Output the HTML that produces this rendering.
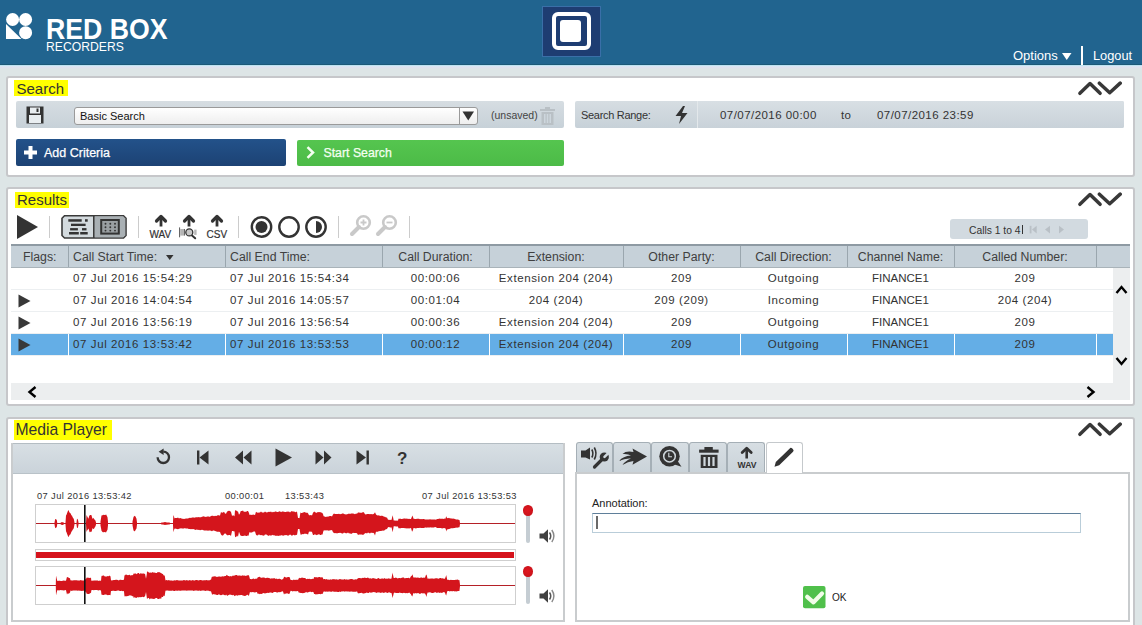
<!DOCTYPE html>
<html><head><meta charset="utf-8">
<style>
*{box-sizing:border-box;margin:0;padding:0}
html,body{width:1142px;height:625px;overflow:hidden}
body{background:#dde5e6;font-family:"Liberation Sans",sans-serif;position:relative;color:#333}
.a{position:absolute}
.hdr{left:0;top:0;width:1142px;height:65px;background:#21648f}
.hline{left:0;top:64px;width:1142px;height:5px;background:linear-gradient(#1c5878 0,#1c5878 1px,#bde2f1 1px,#bde2f1 2px,#dae6f5 2px,#e0e0ec 4px,#dde5e6 5px)}
.panel{background:#fff;border:2px solid #c6c7ca;border-radius:3px}
.title{background:#ffff00;font-size:15px;color:#333;line-height:17px;padding:0 0 0 2.5px;overflow:visible;white-space:nowrap}
.bar{background:linear-gradient(#d6dde2,#c7d1d8);border-radius:2px}
.t11{font-size:11px}
.th{background:#c6d1d9;border-top:2px solid #8e9aa3;border-bottom:1px solid #a9b3b9}
.col{position:absolute;top:0;height:100%;border-left:1px solid #9aa6ae}
.hd{position:absolute;font-size:12.3px;color:#404040;top:4px;white-space:nowrap}
.row{position:absolute;left:11px;width:1102px;height:22px;border-bottom:1px solid #eceff1}
.cell{position:absolute;font-size:11.5px;color:#333;top:4px;white-space:nowrap;letter-spacing:0.6px}
.sel{background:#64aee6}
.vs{position:absolute;top:0;height:22px;border-left:1px solid #fff}
.wbox{border:1px solid #cfcfcf;background:#fff}
.tab{position:absolute;top:442px;height:30px;background:linear-gradient(#d7dee3,#cad3d9);border:1px solid #a5afb6;border-bottom:none;border-radius:3px 3px 0 0}
</style></head><body>

<!-- HEADER -->
<div class="a hdr"></div>
<div class="a hline"></div>
<svg class="a" style="left:6px;top:13px" width="27" height="27" viewBox="0 0 27 27">
 <circle cx="6.6" cy="6.5" r="6.5" fill="#fff"/>
 <circle cx="19.6" cy="6.5" r="6.5" fill="#fff"/>
 <circle cx="19.6" cy="19.7" r="6.5" fill="#fff"/>
 <path d="M0 11 L0 26 L15.5 26 Z" fill="#fff"/>
</svg>
<div class="a" style="left:46px;top:14px;font-size:29px;font-weight:bold;color:#fff;line-height:30px;transform:scaleX(0.92);transform-origin:0 0;white-space:nowrap">RED BOX</div>
<div class="a" style="left:46px;top:41px;font-size:12.3px;color:#fff;line-height:13px;transform:scaleX(0.99);transform-origin:0 0;white-space:nowrap">RECORDERS</div>

<div class="a" style="left:542px;top:6px;width:59px;height:51px;background:#1e3d72;border:1px solid #3a6fa8"></div>
<div class="a" style="left:552px;top:11.5px;width:38.5px;height:38.8px;border:4.2px solid #fff;border-radius:6px"></div>
<div class="a" style="left:560.2px;top:20.4px;width:21.2px;height:21.6px;background:#fff;border-radius:3px"></div>

<div class="a" style="left:1013px;top:48px;font-size:13px;color:#fff;line-height:16px">Options</div>
<svg class="a" style="left:1062px;top:52.5px" width="10" height="8"><path d="M0 0 L9.5 0 L4.75 7 Z" fill="#fff"/></svg>
<div class="a" style="left:1081px;top:46px;width:2px;height:19px;background:#fff"></div>
<div class="a" style="left:1093px;top:48px;font-size:12.8px;color:#fff;line-height:16px">Logout</div>

<!-- SEARCH PANEL -->
<div class="a panel" style="left:6px;top:76px;width:1129px;height:101px"></div>
<div class="a title" style="left:14px;top:80px;height:16px;width:54px">Search</div>
<svg class="a collapse" style="left:1077px;top:81px" width="46" height="15" viewBox="0 0 46 15">
 <path d="M2.9 12.3 L13 2.6 L23.1 12.3" fill="none" stroke="#383838" stroke-width="3.5" stroke-linecap="round" stroke-linejoin="round"/>
 <path d="M22.4 2.2 L32.7 11.7 L43.2 2.1" fill="none" stroke="#383838" stroke-width="3.5" stroke-linecap="round" stroke-linejoin="round"/>
</svg>

<div class="a bar" style="left:16px;top:101px;width:548px;height:27px"></div>
<svg class="a" style="left:26px;top:106px" width="18" height="18" viewBox="0 0 18 18">
 <rect x="0.5" y="0.5" width="17" height="17" fill="#333"/>
 <rect x="4" y="1.5" width="10" height="6" fill="#e9eef1"/>
 <rect x="10.5" y="2.5" width="2" height="3.5" fill="#333"/>
 <rect x="3" y="9" width="12" height="8" fill="#e9eef1"/>
</svg>
<div class="a" style="left:74px;top:107px;width:404px;height:18px;border:1px solid #9a9a9a;border-radius:3px;background:linear-gradient(#fff,#eee)"></div>
<div class="a" style="left:80px;top:110px;font-size:11px;color:#111">Basic Search</div>
<div class="a" style="left:459px;top:108px;width:1px;height:16px;background:#9a9a9a"></div>
<svg class="a" style="left:462px;top:111px" width="13" height="10"><path d="M0.5 0.5 L12 0.5 L6.25 9.5 Z" fill="#333"/></svg>
<div class="a" style="left:491px;top:109px;font-size:10.5px;color:#444">(unsaved)</div>
<svg class="a" style="left:540px;top:107px" width="15" height="18" viewBox="0 0 15 18">
 <rect x="0" y="2" width="15" height="2" fill="#b9c0c5"/>
 <rect x="5" y="0" width="5" height="2" fill="#b9c0c5"/>
 <path d="M1.5 5 H13.5 V18 H1.5 Z" fill="#b9c0c5"/>
 <rect x="4" y="7" width="1.5" height="9" fill="#cdd6dd"/>
 <rect x="6.75" y="7" width="1.5" height="9" fill="#cdd6dd"/>
 <rect x="9.5" y="7" width="1.5" height="9" fill="#cdd6dd"/>
</svg>

<div class="a bar" style="left:575px;top:101px;width:549px;height:27px"></div>
<div class="a" style="left:697px;top:101px;width:427px;height:27px;background:linear-gradient(#d8dfe4,#c9d2d9);border-left:1px solid #e3e8eb;border-radius:0 2px 2px 0"></div>
<div class="a" style="left:581px;top:109px;font-size:11px;letter-spacing:-0.3px;color:#333">Search Range:</div>
<svg class="a" style="left:674px;top:106px" width="15" height="18" viewBox="0 0 15 18"><path d="M9 0 L1.5 10 H7 L5 18 L13.5 7 H8 L11 0 Z" fill="#333"/></svg>
<div class="a" style="left:720px;top:109px;font-size:11.5px;letter-spacing:0.45px;color:#333">07/07/2016 00:00</div>
<div class="a" style="left:841px;top:109px;font-size:11.5px;letter-spacing:0.3px;color:#333">to</div>
<div class="a" style="left:877px;top:109px;font-size:11.5px;letter-spacing:0.45px;color:#333">07/07/2016 23:59</div>

<div class="a" style="left:16px;top:139px;width:270px;height:27px;background:linear-gradient(#23528a,#1c4274);border-radius:2px"></div>
<svg class="a" style="left:24px;top:146px" width="13" height="13" viewBox="0 0 13 13"><path d="M4.5 0 H8.5 V4.5 H13 V8.5 H8.5 V13 H4.5 V8.5 H0 V4.5 H4.5 Z" fill="#fff"/></svg>
<div class="a" style="left:44px;top:146px;font-size:12.5px;color:#fff;-webkit-text-stroke:0.25px #fff">Add Criteria</div>
<div class="a" style="left:297px;top:140px;width:267px;height:26px;background:linear-gradient(#55c54f,#4cbb47);border-radius:2px"></div>
<svg class="a" style="left:306px;top:146px" width="9" height="13" viewBox="0 0 9 13"><path d="M1.5 1.2 L7 6.5 L1.5 11.8" fill="none" stroke="#f4fff0" stroke-width="2.5"/></svg>
<div class="a" style="left:323.5px;top:146px;font-size:12.3px;color:#f4fff0;-webkit-text-stroke:0.25px #f4fff0">Start Search</div>

<!-- RESULTS PANEL -->
<div class="a panel" style="left:6px;top:187px;width:1129px;height:219px"></div>
<div class="a title" style="left:14.5px;top:192px;height:16px;width:54.5px;line-height:15px">Results</div>
<svg class="a" style="left:1077px;top:192px" width="46" height="15" viewBox="0 0 46 15">
 <path d="M2.9 12.3 L13 2.6 L23.1 12.3" fill="none" stroke="#383838" stroke-width="3.5" stroke-linecap="round" stroke-linejoin="round"/>
 <path d="M22.4 2.2 L32.7 11.7 L43.2 2.1" fill="none" stroke="#383838" stroke-width="3.5" stroke-linecap="round" stroke-linejoin="round"/>
</svg>

<svg class="a" style="left:16px;top:214px" width="23" height="26"><path d="M1 1 L22 13 L1 25 Z" fill="#333"/></svg>
<div class="a" style="left:49px;top:216px;width:1px;height:22px;background:#ccc"></div>
<svg class="a" style="left:60px;top:214px" width="68" height="26" viewBox="60 214 68 26">
 <path d="M64.5 215.8 H123.5 L126 218.3 V235.5 L123.5 238 H64.5 L62 235.5 V218.3 Z" fill="#d3dade" stroke="#3a3a3a" stroke-width="1.6"/>
 <path d="M94.5 216.6 H123.2 L125.2 218.6 V235.2 L123.2 237.2 H94.5 Z" fill="#a9b0b4"/>
 <rect x="93" y="216" width="1.6" height="22" fill="#3a3a3a"/>
 <g fill="#333">
 <rect x="68.3" y="219.2" width="13.4" height="2.5"/><rect x="85" y="219.2" width="2.7" height="2.5"/>
 <rect x="71" y="223.7" width="14.6" height="2.3"/>
 <rect x="70.1" y="228.1" width="7.8" height="2.3"/><rect x="82" y="228.1" width="4.5" height="2.3"/>
 <rect x="69" y="232" width="9.8" height="2.5"/><rect x="80.2" y="232" width="7.5" height="2.5"/>
 </g>
 <rect x="101.2" y="220" width="17.6" height="13.6" fill="#9a9fa2" stroke="#333" stroke-width="2"/>
 <g fill="#333"><circle cx="105.5" cy="223.7" r="0.95"/><circle cx="110.3" cy="223.7" r="0.95"/><circle cx="115" cy="223.7" r="0.95"/>
 <circle cx="105.5" cy="227.3" r="0.95"/><circle cx="110.3" cy="227.3" r="0.95"/><circle cx="115" cy="227.3" r="0.95"/>
 <circle cx="105.5" cy="230.6" r="0.95"/><circle cx="110.3" cy="230.6" r="0.95"/><circle cx="115" cy="230.6" r="0.95"/></g>
</svg>
<div class="a" style="left:138px;top:216px;width:1px;height:22px;background:#ccc"></div>

<svg class="a" style="left:154px;top:214px" width="14" height="13"><path d="M2.5 7 L7 2.5 L11.5 7" fill="none" stroke="#333" stroke-width="3.2" stroke-linecap="round" stroke-linejoin="round"/><path d="M7 3 V12.5" stroke="#333" stroke-width="2.8"/></svg>
<div class="a" style="left:149.5px;top:229.5px;font-size:10px;color:#333;line-height:10px;-webkit-text-stroke:0.2px #333">WAV</div>
<svg class="a" style="left:182px;top:214px" width="14" height="13"><path d="M2.5 7 L7 2.5 L11.5 7" fill="none" stroke="#333" stroke-width="3.2" stroke-linecap="round" stroke-linejoin="round"/><path d="M7 3 V12.5" stroke="#333" stroke-width="2.8"/></svg>
<svg class="a" style="left:176px;top:226px" width="24" height="15" viewBox="176 226 24 15">
 <rect x="179" y="227.4" width="1.1" height="9.9" fill="#666"/>
 <rect x="180.2" y="229" width="3.8" height="6.6" fill="#b5b5b5"/>
 <rect x="184" y="229" width="0.9" height="6.6" fill="#555"/>
 <rect x="194.2" y="229.6" width="2.4" height="5.3" fill="#b8b8b8"/>
 <circle cx="189.3" cy="232.4" r="3.5" fill="#c8c8c8" stroke="#333" stroke-width="1.3"/>
 <path d="M192 235.6 L195.2 238.3" stroke="#333" stroke-width="2" stroke-linecap="round"/>
</svg>
<svg class="a" style="left:210px;top:214px" width="14" height="13"><path d="M2.5 7 L7 2.5 L11.5 7" fill="none" stroke="#333" stroke-width="3.2" stroke-linecap="round" stroke-linejoin="round"/><path d="M7 3 V12.5" stroke="#333" stroke-width="2.8"/></svg>
<div class="a" style="left:206.5px;top:229.5px;font-size:10px;color:#333;line-height:10px;-webkit-text-stroke:0.2px #333">CSV</div>
<div class="a" style="left:238px;top:216px;width:1px;height:22px;background:#ccc"></div>

<svg class="a" style="left:250px;top:215px" width="78" height="24">
 <circle cx="11.5" cy="12" r="9.7" fill="none" stroke="#333" stroke-width="2.4"/><circle cx="11.5" cy="12" r="6" fill="#333"/>
 <circle cx="39" cy="12" r="9.7" fill="none" stroke="#333" stroke-width="2.4"/>
 <circle cx="66" cy="12" r="9.7" fill="none" stroke="#333" stroke-width="2.4"/><path d="M66 6 A6 6 0 0 1 66 18 Z" fill="#333"/>
</svg>
<div class="a" style="left:338px;top:216px;width:1px;height:22px;background:#ccc"></div>
<svg class="a" style="left:349px;top:214px" width="52" height="25">
 <g stroke="#c9c9c9" fill="none"><circle cx="14.5" cy="8.5" r="6.3" stroke-width="2.6"/><path d="M10 13 L3 20" stroke-width="4" stroke-linecap="round"/><path d="M14.5 5.5 V11.5 M11.5 8.5 H17.5" stroke-width="1.8"/>
 <circle cx="40.5" cy="8.5" r="6.3" stroke-width="2.6"/><path d="M36 13 L29 20" stroke-width="4" stroke-linecap="round"/><path d="M37.5 8.5 H43.5" stroke-width="1.8"/></g>
</svg>
<div class="a" style="left:409px;top:216px;width:1px;height:22px;background:#ccc"></div>

<div class="a" style="left:950px;top:219px;width:138px;height:20px;background:#d2dae0;border-radius:3px"></div>
<div class="a" style="left:969px;top:224.5px;font-size:10.3px;color:#333">Calls 1 to 4</div>
<div class="a" style="left:1022px;top:224.5px;width:1.2px;height:9.5px;background:#333"></div>
<svg class="a" style="left:1029px;top:225px" width="36" height="10">
 <g fill="#b9c0c6"><rect x="0.7" y="0.8" width="1.8" height="7.6"/><path d="M7.7 0.8 L3 4.6 L7.7 8.4 Z"/><path d="M21 0.8 L16 4.6 L21 8.4 Z"/><path d="M30 0.8 L35 4.6 L30 8.4 Z"/></g>
</svg>

<!-- table -->
<div class="a th" style="left:11px;top:244px;width:1119px;height:24px">
 <div class="col" style="left:57px"></div>
 <div class="col" style="left:214px"></div>
 <div class="col" style="left:371px"></div>
 <div class="col" style="left:478px"></div>
 <div class="col" style="left:612px"></div>
 <div class="col" style="left:729px"></div>
 <div class="col" style="left:836px"></div>
 <div class="col" style="left:943px"></div>
 <div class="col" style="left:1085px"></div>
 <div class="hd" style="left:12px">Flags:</div>
 <div class="hd" style="left:62px">Call Start Time:</div>
 <svg class="a" style="left:155px;top:9px" width="8" height="6"><path d="M0 0 H7.5 L3.75 5 Z" fill="#333"/></svg>
 <div class="hd" style="left:219px">Call End Time:</div>
 <div class="hd" style="left:371px;width:107px;text-align:center">Call Duration:</div>
 <div class="hd" style="left:478px;width:134px;text-align:center">Extension:</div>
 <div class="hd" style="left:612px;width:117px;text-align:center">Other Party:</div>
 <div class="hd" style="left:729px;width:107px;text-align:center">Call Direction:</div>
 <div class="hd" style="left:836px;width:107px;text-align:center">Channel Name:</div>
 <div class="hd" style="left:943px;width:142px;text-align:center">Called Number:</div>
</div>

<div class="row" style="top:268px"><div class="cell" style="left:62px">07 Jul 2016 15:54:29</div><div class="cell" style="left:219px">07 Jul 2016 15:54:34</div><div class="cell" style="left:371px;width:107px;text-align:center">00:00:06</div><div class="cell" style="left:478px;width:134px;text-align:center">Extension 204 (204)</div><div class="cell" style="left:612px;width:117px;text-align:center">209</div><div class="cell" style="left:729px;width:107px;text-align:center">Outgoing</div><div class="cell" style="left:836px;width:107px;text-align:center;letter-spacing:0">FINANCE1</div><div class="cell" style="left:943px;width:142px;text-align:center">209</div></div>
<div class="row" style="top:290px"><svg class="a" style="left:7px;top:3.5px" width="14" height="14"><path d="M0.5 0.5 L12.5 7 L0.5 13.5 Z" fill="#383838"/></svg><div class="cell" style="left:62px">07 Jul 2016 14:04:54</div><div class="cell" style="left:219px">07 Jul 2016 14:05:57</div><div class="cell" style="left:371px;width:107px;text-align:center">00:01:04</div><div class="cell" style="left:478px;width:134px;text-align:center">204 (204)</div><div class="cell" style="left:612px;width:117px;text-align:center">209 (209)</div><div class="cell" style="left:729px;width:107px;text-align:center">Incoming</div><div class="cell" style="left:836px;width:107px;text-align:center;letter-spacing:0">FINANCE1</div><div class="cell" style="left:943px;width:142px;text-align:center">204 (204)</div></div>
<div class="row" style="top:312px"><svg class="a" style="left:7px;top:3.5px" width="14" height="14"><path d="M0.5 0.5 L12.5 7 L0.5 13.5 Z" fill="#383838"/></svg><div class="cell" style="left:62px">07 Jul 2016 13:56:19</div><div class="cell" style="left:219px">07 Jul 2016 13:56:54</div><div class="cell" style="left:371px;width:107px;text-align:center">00:00:36</div><div class="cell" style="left:478px;width:134px;text-align:center">Extension 204 (204)</div><div class="cell" style="left:612px;width:117px;text-align:center">209</div><div class="cell" style="left:729px;width:107px;text-align:center">Outgoing</div><div class="cell" style="left:836px;width:107px;text-align:center;letter-spacing:0">FINANCE1</div><div class="cell" style="left:943px;width:142px;text-align:center">209</div></div>
<div class="row sel" style="top:334px"><div class="vs" style="left:57px"></div><div class="vs" style="left:214px"></div><div class="vs" style="left:371px"></div><div class="vs" style="left:478px"></div><div class="vs" style="left:612px"></div><div class="vs" style="left:729px"></div><div class="vs" style="left:836px"></div><div class="vs" style="left:943px"></div><div class="vs" style="left:1085px"></div><svg class="a" style="left:7px;top:3.5px" width="14" height="14"><path d="M0.5 0.5 L12.5 7 L0.5 13.5 Z" fill="#383838"/></svg><div class="cell" style="left:62px">07 Jul 2016 13:53:42</div><div class="cell" style="left:219px">07 Jul 2016 13:53:53</div><div class="cell" style="left:371px;width:107px;text-align:center">00:00:12</div><div class="cell" style="left:478px;width:134px;text-align:center">Extension 204 (204)</div><div class="cell" style="left:612px;width:117px;text-align:center">209</div><div class="cell" style="left:729px;width:107px;text-align:center">Outgoing</div><div class="cell" style="left:836px;width:107px;text-align:center;letter-spacing:0">FINANCE1</div><div class="cell" style="left:943px;width:142px;text-align:center">209</div></div>

<div class="a" style="left:1113px;top:268px;width:17px;height:115px;background:#eceeef"></div>
<svg class="a" style="left:1115px;top:284px" width="13" height="11"><path d="M1.5 9 L6.5 3 L11.5 9" fill="none" stroke="#000" stroke-width="2.4"/></svg>
<svg class="a" style="left:1115px;top:356px" width="13" height="11"><path d="M1.5 2 L6.5 8 L11.5 2" fill="none" stroke="#000" stroke-width="2.4"/></svg>
<div class="a" style="left:11px;top:383px;width:1119px;height:17px;background:#eceeef"></div>
<svg class="a" style="left:26px;top:386px" width="12" height="12"><path d="M9.5 1 L3.5 6 L9.5 11" fill="none" stroke="#000" stroke-width="2.4"/></svg>
<svg class="a" style="left:1085px;top:386px" width="12" height="12"><path d="M2.5 1 L8.5 6 L2.5 11" fill="none" stroke="#000" stroke-width="2.4"/></svg>

<!-- MEDIA PLAYER PANEL -->
<div class="a panel" style="left:6px;top:417px;width:1129px;height:215px"></div>
<div class="a title" style="left:14px;top:420px;height:19.5px;width:98px;line-height:20px;font-size:15.7px;padding-left:1.5px">Media Player</div>
<svg class="a" style="left:1077px;top:422px" width="46" height="15" viewBox="0 0 46 15">
 <path d="M2.9 12.3 L13 2.6 L23.1 12.3" fill="none" stroke="#383838" stroke-width="3.5" stroke-linecap="round" stroke-linejoin="round"/>
 <path d="M22.4 2.2 L32.7 11.7 L43.2 2.1" fill="none" stroke="#383838" stroke-width="3.5" stroke-linecap="round" stroke-linejoin="round"/>
</svg>

<div class="a" style="left:11px;top:443px;width:554px;height:179px;border:2px solid #c9ccce;background:#fff"></div>
<div class="a" style="left:13px;top:443px;width:550px;height:31px;background:linear-gradient(#d8dfe4,#cad3da);border-top:1px solid #b4bdc3;border-bottom:1px solid #b9c2c8"></div>
<svg class="a" style="left:150px;top:446px" width="270" height="24">
 <g fill="#333" stroke="#333">
 <path d="M7.6 11.3 A5.7 5.7 0 1 0 13.3 5.6" fill="none" stroke-width="2.3"/><path d="M8.6 5.8 L13.6 2.6 L13.6 9 Z" stroke="none"/>
 <rect x="47" y="4.5" width="2.4" height="14" stroke="none"/><path d="M58.5 4.5 V18.5 L49.5 11.5 Z" stroke="none"/>
 <path d="M93 4.5 V18.5 L85 11.5 Z M101.5 4.5 V18.5 L93.5 11.5 Z" stroke="none"/>
 <path d="M125.5 2.5 V20.5 L142 11.5 Z" stroke="none"/>
 <path d="M165.5 4.5 V18.5 L173.5 11.5 Z M174 4.5 V18.5 L181.5 11.5 Z" stroke="none"/>
 <path d="M206.5 4.5 V18.5 L216 11.5 Z" stroke="none"/><rect x="216.5" y="4.5" width="2.4" height="14" stroke="none"/>
 </g>
 <text x="247" y="18" font-family="Liberation Sans" font-weight="bold" font-size="17" fill="#333">?</text>
</svg>

<div class="a" style="left:37px;top:491.2px;font-size:9.3px;color:#333;letter-spacing:0.4px">07 Jul 2016 13:53:42</div>
<div class="a" style="left:225px;top:491.2px;font-size:9.3px;color:#333;letter-spacing:0.4px">00:00:01</div>
<div class="a" style="left:285px;top:491.2px;font-size:9.3px;color:#333;letter-spacing:0.4px">13:53:43</div>
<div class="a" style="left:422px;top:491.2px;font-size:9.3px;color:#333;letter-spacing:0.4px">07 Jul 2016 13:53:53</div>

<div class="a wbox" style="left:35px;top:504px;width:481px;height:39px"></div>
<div class="a wbox" style="left:35px;top:549px;width:481px;height:12px"></div>
<div class="a" style="left:36px;top:552px;width:478px;height:6px;background:#d5121b"></div>
<div class="a wbox" style="left:35px;top:566px;width:481px;height:39px"></div>
<svg class="a" style="left:0;top:0" width="1142" height="625">
 <rect x="36" y="523" width="479" height="1" fill="#b52027"/>
 <rect x="36" y="585" width="479" height="1" fill="#b52027"/>
 <path fill="#d4151c" d="M54.5 522.5 55.2 519.0 55.5 519.0 56.5 519.7 56.7 519.5 57.2 522.6 L57.2 524.4 56.7 527.5 56.5 527.2 55.5 528.0 55.2 528.3 54.5 524.4Z M60.5 522.8 61.5 522.2 62.0 521.9 62.5 522.3 63.5 522.5 64.0 522.8 L64.0 524.3 63.5 524.4 62.5 524.9 62.0 524.9 61.5 524.7 60.5 524.3Z M65.5 522.5 66.0 515.5 66.5 514.7 67.5 511.9 68.3 509.9 68.5 510.3 69.5 512.4 70.5 513.3 71.5 515.6 72.0 515.6 72.5 517.0 73.5 518.6 73.8 519.0 74.5 522.5 L74.5 524.4 73.8 528.1 73.5 528.7 72.5 530.1 72.0 531.2 71.5 531.6 70.5 534.3 69.5 535.0 68.5 537.2 68.3 536.7 67.5 535.1 66.5 532.3 66.0 531.3 65.5 524.4Z M76.5 522.6 77.0 518.8 77.5 519.0 78.0 519.9 78.5 522.5 L78.5 524.4 78.0 527.3 77.5 527.9 77.0 528.1 76.5 524.4Z M86.0 522.6 86.5 514.9 87.0 516.0 88.0 517.9 88.5 518.8 89.0 516.5 89.5 515.6 90.0 514.9 91.0 515.0 91.5 515.3 92.0 517.2 92.5 518.8 93.0 518.4 93.5 517.7 94.0 518.9 95.0 520.1 95.5 520.8 96.0 522.6 L96.0 524.4 95.5 526.2 95.0 526.9 94.0 528.7 93.5 529.1 93.0 528.7 92.5 527.9 92.0 530.3 91.5 531.9 91.0 531.4 90.0 532.3 89.5 531.9 89.0 529.9 88.5 528.5 88.0 529.2 87.0 530.8 86.5 532.0 86.0 524.4Z M100.5 521.6 101.5 515.6 102.5 515.3 103.0 514.9 103.5 514.7 104.5 514.9 105.5 515.0 106.0 514.3 106.5 515.2 107.5 517.2 108.0 521.7 L108.0 525.3 107.5 529.8 106.5 531.4 106.0 532.4 105.5 532.2 104.5 532.0 103.5 532.3 103.0 532.2 102.5 532.1 101.5 530.7 100.5 525.4Z M132.5 521.6 133.5 517.1 134.5 515.8 135.0 516.2 135.5 516.6 136.5 518.7 137.0 522.5 L137.0 524.4 136.5 528.5 135.5 530.0 135.0 531.3 134.5 531.2 133.5 530.4 132.5 525.3Z M161.0 522.7 162.0 522.6 163.0 522.4 164.0 522.2 165.0 522.1 166.0 522.2 167.0 522.4 168.0 522.5 169.0 522.6 170.0 522.7 L170.0 524.2 169.0 524.4 168.0 524.5 167.0 524.7 166.0 524.7 165.0 525.0 164.0 524.8 163.0 524.6 162.0 524.4 161.0 524.3Z M173.0 521.5 173.4 515.0 174.0 516.5 174.5 518.5 175.0 518.1 176.0 518.1 177.0 517.9 178.0 517.5 179.0 518.4 180.0 518.1 181.0 518.3 182.0 518.8 183.0 518.7 184.0 518.9 185.0 518.8 186.0 518.5 187.0 518.6 188.0 518.4 189.0 518.1 190.0 517.8 191.0 517.9 192.0 517.5 193.0 517.5 194.0 517.5 195.0 517.8 196.0 517.1 197.0 517.6 198.0 517.0 199.0 517.2 200.0 517.3 201.0 517.2 202.0 516.8 203.0 516.5 204.0 516.3 205.0 517.0 206.0 516.8 207.0 516.8 208.0 516.3 209.0 516.7 210.0 516.7 211.0 515.9 212.0 515.8 213.0 515.7 214.0 516.3 215.0 515.8 216.0 516.1 217.0 515.7 218.0 515.0 219.0 515.6 220.0 515.5 221.0 511.9 222.0 512.7 223.0 512.5 224.0 511.7 225.0 513.5 226.0 513.8 227.0 511.7 228.0 510.9 229.0 510.7 230.0 511.1 231.0 511.9 232.0 515.7 233.0 515.6 234.0 515.5 234.5 516.4 235.0 510.5 236.0 510.2 237.0 511.3 238.0 511.6 239.0 514.7 240.0 513.2 240.5 511.6 241.0 510.9 242.0 511.0 243.0 510.6 244.0 512.0 245.0 511.5 246.0 512.0 247.0 511.0 248.0 511.0 248.5 511.9 249.0 512.9 249.5 515.1 250.0 514.8 251.0 514.8 252.0 515.1 253.0 514.6 254.0 514.8 255.0 515.0 256.0 511.7 257.0 512.6 258.0 512.8 259.0 512.5 260.0 512.6 261.0 511.5 262.0 512.6 263.0 512.6 264.0 512.6 265.0 511.6 266.0 512.3 267.0 512.4 268.0 512.1 269.0 511.7 270.0 512.1 271.0 511.4 272.0 512.4 273.0 511.8 274.0 512.3 275.0 511.6 276.0 511.4 277.0 512.0 278.0 511.9 279.0 511.5 280.0 511.2 281.0 512.2 282.0 511.6 283.0 511.4 284.0 511.8 285.0 512.0 286.0 512.0 287.0 511.4 288.0 511.7 289.0 511.6 290.0 512.4 291.0 511.4 292.0 511.1 293.0 511.8 294.0 511.2 295.0 512.3 296.0 512.0 297.0 511.6 298.0 518.0 299.0 518.1 299.5 518.2 300.0 514.9 300.5 512.3 301.0 513.0 302.0 512.9 303.0 512.5 304.0 512.2 305.0 512.1 306.0 513.1 307.0 512.4 308.0 513.3 309.0 515.3 310.0 515.2 311.0 515.0 312.0 515.5 313.0 512.7 314.0 511.8 315.0 511.8 316.0 513.0 317.0 512.6 318.0 511.9 319.0 512.2 320.0 511.9 321.0 512.5 322.0 512.8 322.5 513.2 323.0 514.1 323.6 516.2 324.0 516.2 325.0 516.7 326.0 516.9 327.0 516.4 328.0 516.7 329.0 516.3 330.0 516.1 331.0 516.1 332.0 516.5 333.0 514.4 334.0 513.6 335.0 514.1 336.0 514.0 337.0 514.1 338.0 513.9 339.0 513.7 340.0 514.3 341.0 513.9 342.0 513.8 343.0 513.3 344.0 514.0 345.0 514.3 346.0 514.4 347.0 514.2 348.0 514.1 349.0 513.5 350.0 513.9 351.0 513.6 352.0 513.6 353.0 513.6 354.0 513.8 355.0 514.2 356.0 513.6 357.0 513.8 358.0 512.4 359.0 512.4 360.0 512.8 361.0 512.7 362.0 512.7 363.0 512.0 364.0 512.5 365.0 514.2 366.0 514.5 367.0 514.1 368.0 514.1 369.0 514.0 370.0 514.3 371.0 514.1 372.0 514.3 373.0 514.3 374.0 513.8 375.0 512.3 376.0 514.6 377.0 515.2 378.0 515.4 379.0 515.2 380.0 516.0 381.0 515.7 382.0 515.8 383.0 516.0 384.0 516.8 385.0 516.7 386.0 517.6 387.0 517.5 388.0 519.8 389.0 519.7 390.0 519.9 391.0 519.8 391.5 520.0 392.0 517.9 392.6 515.2 393.0 517.1 393.7 520.5 394.0 520.6 395.0 520.6 396.0 520.8 397.0 520.5 398.0 520.7 398.5 518.6 399.0 518.9 400.0 518.6 401.0 518.9 402.0 519.1 403.0 518.7 404.0 518.6 405.0 518.6 406.0 518.8 407.0 518.6 408.0 519.0 409.0 518.8 410.0 518.9 411.0 518.9 412.0 516.4 412.3 515.4 413.0 517.1 413.5 518.8 414.0 518.8 415.0 519.0 416.0 519.1 417.0 518.7 418.0 518.7 419.0 518.8 420.0 519.3 421.0 518.9 422.0 519.3 423.0 519.1 424.0 519.0 425.0 519.4 426.0 519.4 427.0 519.5 428.0 519.5 429.0 519.5 430.0 519.3 431.0 519.6 432.0 519.6 433.0 519.6 434.0 519.6 435.0 519.6 436.0 519.7 437.0 518.9 438.0 518.9 439.0 518.7 440.0 518.6 441.0 519.0 442.0 518.5 443.0 519.0 444.0 518.7 445.0 518.5 445.5 518.8 446.0 516.7 446.2 516.3 447.0 517.9 448.0 518.2 449.0 517.8 450.0 518.5 451.0 518.2 452.0 518.8 453.0 518.6 454.0 518.8 455.0 519.0 456.0 519.4 457.0 519.4 458.0 519.6 459.0 519.9 459.5 519.9 460.0 522.9 L460.0 524.1 459.5 527.2 459.0 527.2 458.0 527.5 457.0 527.8 456.0 527.5 455.0 528.0 454.0 528.1 453.0 528.3 452.0 528.2 451.0 528.3 450.0 528.8 449.0 528.9 448.0 529.3 447.0 529.4 446.2 531.5 446.0 530.0 445.5 528.4 445.0 528.2 444.0 527.9 443.0 528.2 442.0 528.4 441.0 528.0 440.0 527.9 439.0 527.9 438.0 528.0 437.0 528.1 436.0 527.2 435.0 527.1 434.0 527.4 433.0 527.6 432.0 527.4 431.0 527.5 430.0 527.3 429.0 527.7 428.0 527.3 427.0 527.7 426.0 527.5 425.0 527.6 424.0 528.0 423.0 528.0 422.0 528.1 421.0 528.1 420.0 527.7 419.0 528.0 418.0 528.1 417.0 528.0 416.0 528.4 415.0 528.3 414.0 528.0 413.5 527.9 413.0 529.9 412.3 531.6 412.0 531.5 411.0 528.0 410.0 528.3 409.0 528.4 408.0 528.2 407.0 528.4 406.0 528.3 405.0 528.3 404.0 528.1 403.0 528.0 402.0 528.1 401.0 528.0 400.0 528.5 399.0 528.0 398.5 528.5 398.0 526.5 397.0 526.4 396.0 526.4 395.0 526.2 394.0 526.2 393.7 526.2 393.0 530.2 392.6 532.2 392.0 529.2 391.5 527.3 391.0 527.4 390.0 527.4 389.0 527.1 388.0 527.3 387.0 528.9 386.0 529.3 385.0 529.7 384.0 530.7 383.0 530.5 382.0 530.8 381.0 531.0 380.0 530.9 379.0 531.3 378.0 531.4 377.0 531.9 376.0 531.6 375.0 535.6 374.0 533.3 373.0 532.8 372.0 533.0 371.0 532.4 370.0 533.5 369.0 533.1 368.0 532.6 367.0 533.4 366.0 532.9 365.0 533.3 364.0 534.2 363.0 535.1 362.0 534.6 361.0 534.4 360.0 534.4 359.0 534.6 358.0 534.9 357.0 533.2 356.0 533.0 355.0 533.0 354.0 533.0 353.0 532.8 352.0 533.4 351.0 533.9 350.0 533.2 349.0 533.6 348.0 532.6 347.0 533.3 346.0 533.2 345.0 533.1 344.0 532.6 343.0 533.4 342.0 533.4 341.0 532.9 340.0 532.8 339.0 533.1 338.0 533.1 337.0 533.6 336.0 533.1 335.0 533.2 334.0 532.9 333.0 532.3 332.0 530.1 331.0 530.3 330.0 530.3 329.0 530.7 328.0 530.5 327.0 530.2 326.0 530.5 325.0 530.3 324.0 530.4 323.6 530.5 323.0 532.6 322.5 534.7 322.0 534.2 321.0 535.0 320.0 534.9 319.0 534.1 318.0 534.8 317.0 534.7 316.0 535.2 315.0 534.1 314.0 535.0 313.0 534.9 312.0 532.1 311.0 531.5 310.0 531.7 309.0 531.6 308.0 534.8 307.0 533.7 306.0 534.1 305.0 533.6 304.0 534.0 303.0 534.3 302.0 534.0 301.0 534.9 300.5 534.2 300.0 532.0 299.5 529.1 299.0 528.9 298.0 529.1 297.0 534.9 296.0 534.7 295.0 535.5 294.0 534.9 293.0 534.7 292.0 535.9 291.0 535.0 290.0 534.6 289.0 535.2 288.0 535.7 287.0 535.3 286.0 534.9 285.0 535.3 284.0 535.2 283.0 536.0 282.0 535.1 281.0 535.4 280.0 535.6 279.0 535.8 278.0 535.9 277.0 535.4 276.0 536.0 275.0 535.5 274.0 535.3 273.0 535.2 272.0 534.8 271.0 535.9 270.0 535.0 269.0 535.7 268.0 535.7 267.0 534.8 266.0 534.5 265.0 534.5 264.0 535.7 263.0 535.5 262.0 535.3 261.0 534.9 260.0 535.2 259.0 534.2 258.0 535.3 257.0 535.4 256.0 534.8 255.0 531.6 254.0 531.6 253.0 531.8 252.0 532.4 251.0 532.4 250.0 532.5 249.5 531.9 249.0 533.8 248.5 536.0 248.0 535.2 247.0 536.0 246.0 535.9 245.0 535.5 244.0 535.8 243.0 536.1 242.0 536.1 241.0 535.7 240.5 535.5 240.0 534.4 239.0 531.8 238.0 536.8 237.0 535.6 236.0 537.2 235.0 536.7 234.5 531.2 234.0 531.5 233.0 530.9 232.0 531.0 231.0 536.0 230.0 535.0 229.0 535.1 228.0 535.3 227.0 535.3 226.0 533.9 225.0 533.2 224.0 534.2 223.0 535.4 222.0 535.5 221.0 534.4 220.0 532.0 219.0 531.7 218.0 531.8 217.0 531.7 216.0 531.3 215.0 530.9 214.0 530.6 213.0 530.5 212.0 531.3 211.0 530.7 210.0 530.4 209.0 530.5 208.0 530.8 207.0 530.6 206.0 530.4 205.0 530.6 204.0 530.6 203.0 530.1 202.0 529.8 201.0 530.0 200.0 530.2 199.0 529.7 198.0 530.1 197.0 529.5 196.0 529.8 195.0 529.9 194.0 529.1 193.0 529.3 192.0 529.1 191.0 529.3 190.0 528.9 189.0 529.0 188.0 528.7 187.0 528.3 186.0 528.7 185.0 528.1 184.0 528.6 183.0 528.5 182.0 528.4 181.0 528.3 180.0 528.5 179.0 528.7 178.0 529.3 177.0 528.9 176.0 528.8 175.0 528.6 174.5 528.7 174.0 529.9 173.4 532.2 173.0 525.3Z"/>
 <path fill="#d4151c" d="M55.8 584.6 56.0 575.6 56.8 579.1 57.4 580.9 57.8 580.9 58.8 580.8 59.8 580.8 60.8 580.9 61.8 581.1 62.8 580.8 63.8 580.5 64.8 580.8 65.8 580.7 66.0 580.8 66.8 577.5 67.0 576.9 67.8 577.3 68.8 577.8 69.8 578.3 70.0 578.2 70.5 580.5 70.8 580.2 71.8 580.6 72.8 580.5 73.8 580.3 74.8 580.3 75.8 580.3 76.8 580.2 77.8 580.6 78.8 580.4 79.8 580.5 80.8 580.1 81.8 580.5 82.8 580.6 83.8 580.6 84.0 580.6 84.7 577.0 84.8 577.5 85.5 579.7 85.8 579.3 86.8 577.5 87.0 577.4 87.8 577.7 88.8 577.7 89.8 577.9 90.8 577.7 91.0 577.6 91.3 581.0 91.8 580.6 92.8 580.8 93.8 580.5 94.8 580.6 95.8 580.5 96.8 580.5 97.8 580.5 98.8 581.0 99.8 580.6 100.8 580.7 101.0 581.1 101.5 575.5 101.8 576.2 102.8 575.6 103.8 575.5 104.8 576.4 105.8 576.6 106.8 576.5 107.8 576.1 108.8 576.3 109.8 575.6 110.5 576.5 110.8 578.7 111.0 580.3 111.8 580.6 112.8 580.3 113.8 579.9 114.8 579.9 115.8 579.8 116.8 579.8 117.8 580.1 118.8 580.4 119.8 579.8 120.8 579.8 121.8 580.0 122.8 580.1 123.8 579.8 124.0 579.5 124.5 575.0 124.8 575.5 125.8 574.6 126.8 574.8 127.8 575.2 128.8 574.9 129.8 574.8 130.8 575.8 131.8 575.1 132.8 575.3 133.0 575.1 133.8 573.2 134.0 573.8 134.8 573.4 135.8 573.6 136.8 574.3 137.8 572.9 138.8 573.1 139.8 574.3 140.8 573.1 141.8 573.8 142.8 573.6 143.8 573.5 144.8 574.0 145.0 573.6 145.8 577.7 146.0 578.8 146.8 574.0 147.0 571.7 147.8 571.6 148.8 572.6 149.8 572.7 150.8 572.6 151.8 572.7 152.8 572.1 153.8 572.8 154.8 572.4 155.8 573.1 156.8 573.1 157.8 572.0 158.8 572.3 159.8 572.2 160.8 573.0 161.0 572.9 161.8 573.6 162.0 573.7 162.8 573.9 163.8 575.4 164.6 575.4 164.8 576.1 165.5 580.4 165.8 580.3 166.8 580.1 167.8 580.6 168.8 580.1 169.8 580.5 170.8 580.6 171.8 580.5 172.8 580.7 173.8 580.4 174.8 580.3 175.8 580.4 176.8 580.1 177.8 580.3 178.8 580.5 179.8 580.5 180.8 580.6 181.8 580.5 182.8 580.5 183.8 580.1 184.8 580.3 185.8 580.6 186.8 580.0 187.8 580.5 188.8 580.4 189.8 580.0 190.8 580.5 191.8 580.6 192.8 580.1 193.8 580.5 194.8 580.5 195.8 580.1 196.8 580.1 197.8 580.3 198.8 580.4 199.8 580.1 200.8 580.0 201.8 580.3 202.8 580.4 203.8 580.3 204.8 580.2 205.8 580.3 206.8 580.1 207.0 580.1 207.8 580.4 208.8 580.2 209.8 580.3 210.8 579.6 211.0 579.8 211.8 576.7 212.0 577.1 212.8 576.6 213.8 576.4 214.8 576.3 215.8 576.4 216.8 576.9 217.8 576.8 218.8 576.5 219.8 576.5 220.8 576.7 221.8 576.4 222.8 576.2 223.8 576.5 224.8 575.9 225.8 576.1 226.0 575.8 226.8 574.8 227.0 575.0 227.8 575.7 228.0 576.0 228.8 576.0 229.8 576.6 230.8 576.0 231.8 576.6 232.8 575.6 233.6 575.7 233.8 575.7 234.5 575.5 234.8 575.6 235.8 575.1 236.8 575.0 237.8 575.8 238.8 575.5 239.8 575.6 240.8 575.8 241.8 575.7 242.8 575.2 243.8 575.7 244.8 575.4 245.8 576.1 246.8 575.5 247.8 575.2 248.8 575.2 249.0 575.4 249.8 578.6 250.0 579.1 250.8 579.0 251.8 579.2 252.8 578.7 253.8 578.6 254.8 579.3 255.8 578.6 256.8 578.7 257.0 578.7 257.8 577.2 258.0 577.2 258.8 577.0 259.8 576.7 260.8 577.7 261.8 577.7 262.8 577.5 263.8 577.4 264.8 577.8 265.8 578.3 266.8 577.8 267.8 577.8 268.8 578.1 269.8 578.2 270.8 578.7 271.8 578.3 272.8 578.5 273.8 578.2 274.8 578.3 275.8 578.9 276.8 578.4 277.8 579.2 278.8 578.7 279.8 578.8 280.8 579.3 281.8 579.7 282.8 579.0 283.0 579.2 283.8 577.6 284.0 577.0 284.8 576.8 285.8 577.5 286.8 577.5 287.8 577.0 288.8 577.1 289.5 577.1 289.8 577.8 290.5 579.8 290.8 580.1 291.8 580.0 292.8 580.2 293.8 579.6 294.8 580.0 295.8 579.8 296.8 579.8 297.8 579.8 298.0 580.1 298.8 578.3 299.0 578.2 299.8 577.7 300.8 578.2 301.8 577.5 302.8 577.7 303.8 578.1 304.8 578.1 305.0 578.2 305.8 578.3 306.0 579.2 306.8 579.0 307.8 578.7 308.8 579.0 309.8 578.7 310.8 579.3 311.8 578.9 312.8 578.7 313.5 579.1 313.8 578.2 314.0 576.9 314.8 577.3 315.8 577.2 316.8 577.3 317.8 577.5 318.8 576.9 319.8 576.9 320.8 577.5 321.8 577.3 322.5 577.3 322.8 577.7 323.5 579.4 323.8 579.1 324.8 579.1 325.8 579.4 326.8 579.1 327.8 579.7 328.8 579.5 329.8 579.7 330.8 579.2 331.8 579.7 332.8 579.0 333.8 579.2 334.8 579.2 335.8 579.6 336.8 579.3 337.8 579.7 338.8 579.5 339.8 579.1 340.8 579.3 341.8 579.5 342.8 579.5 343.8 579.6 344.8 579.1 345.8 579.8 346.8 579.2 347.8 579.7 348.8 579.5 349.8 579.2 350.8 579.0 351.8 579.1 352.8 579.3 353.8 579.8 354.8 579.4 355.8 579.2 356.8 579.4 357.0 579.1 357.8 578.4 358.0 578.2 358.8 578.0 359.8 578.0 360.8 578.3 361.8 578.2 362.8 577.7 363.8 578.0 364.8 577.6 365.8 578.0 366.8 578.1 367.8 577.6 368.0 577.6 368.8 578.3 369.0 578.3 369.8 578.4 370.8 578.3 371.8 578.8 372.8 578.1 373.8 578.3 374.8 578.6 375.8 578.8 376.8 578.9 377.8 578.3 378.8 578.0 379.8 578.9 380.8 578.8 381.8 578.5 382.8 578.4 383.8 578.7 384.8 578.0 385.8 578.9 386.8 578.6 387.8 578.8 388.8 578.2 389.8 578.8 390.8 578.8 391.5 578.5 391.8 576.8 392.6 572.5 392.8 574.1 393.7 578.1 393.8 578.0 394.8 577.9 395.8 577.6 396.8 577.9 397.8 578.4 398.8 578.0 399.8 577.9 400.8 578.3 401.8 577.7 402.8 577.6 403.8 577.5 404.8 578.4 405.8 578.0 406.8 577.9 407.8 577.9 408.8 577.7 409.8 578.4 410.0 578.1 410.8 576.4 411.8 575.7 412.3 574.3 412.8 575.4 413.4 577.4 413.8 577.5 414.8 577.6 415.8 577.5 416.8 577.8 417.8 577.5 418.8 577.8 419.8 578.0 420.8 577.6 421.8 577.5 422.8 578.0 423.8 577.6 424.8 577.7 425.0 577.8 425.8 575.3 426.5 574.4 426.8 575.4 427.6 578.7 427.8 578.8 428.8 578.4 429.8 578.7 430.8 578.6 431.8 578.4 432.8 578.4 433.8 578.8 434.8 578.5 435.8 578.2 436.8 578.3 437.8 578.5 438.8 578.8 439.8 578.1 440.8 578.0 441.8 578.6 442.8 578.3 443.8 578.8 444.8 578.8 445.0 578.5 445.8 576.4 446.2 574.9 446.8 577.8 447.3 579.8 447.8 579.9 448.8 579.7 449.8 580.2 450.8 579.7 451.8 580.0 452.8 579.9 453.8 580.1 454.8 579.9 455.8 579.8 456.8 579.8 457.8 579.6 458.8 580.2 459.4 579.9 459.8 583.1 460.0 584.9 L460.0 586.1 459.8 587.8 459.4 590.9 458.8 590.9 457.8 591.0 456.8 591.4 455.8 591.2 454.8 591.4 453.8 591.1 452.8 591.3 451.8 591.3 450.8 590.9 449.8 591.4 448.8 590.9 447.8 591.1 447.3 591.3 446.8 593.1 446.2 595.4 445.8 595.1 445.0 592.8 444.8 592.4 443.8 592.1 442.8 592.6 441.8 593.0 440.8 592.6 439.8 593.0 438.8 592.6 437.8 592.6 436.8 592.9 435.8 592.2 434.8 592.3 433.8 592.7 432.8 592.9 431.8 593.0 430.8 592.4 429.8 592.2 428.8 592.4 427.8 592.5 427.6 592.6 426.8 595.0 426.5 596.9 425.8 595.0 425.0 593.6 424.8 593.6 423.8 593.2 422.8 593.6 421.8 593.0 420.8 593.4 419.8 593.9 418.8 593.3 417.8 593.1 416.8 593.6 415.8 593.0 414.8 593.5 413.8 593.3 413.4 593.1 412.8 595.0 412.3 596.5 411.8 595.9 410.8 593.9 410.0 593.5 409.8 592.7 408.8 592.8 407.8 593.2 406.8 593.1 405.8 593.3 404.8 592.9 403.8 592.8 402.8 593.2 401.8 592.9 400.8 592.9 399.8 592.6 398.8 593.1 397.8 593.0 396.8 593.1 395.8 593.1 394.8 592.6 393.8 593.0 393.7 593.4 392.8 597.2 392.6 597.9 391.8 594.3 391.5 592.9 390.8 592.9 389.8 592.6 388.8 592.3 387.8 593.0 386.8 592.7 385.8 592.3 384.8 592.5 383.8 592.9 382.8 592.6 381.8 592.5 380.8 592.9 379.8 592.4 378.8 592.4 377.8 592.2 376.8 593.0 375.8 592.5 374.8 592.3 373.8 592.1 372.8 592.3 371.8 592.5 370.8 592.7 369.8 592.2 369.0 592.4 368.8 593.0 368.0 592.9 367.8 593.0 366.8 592.6 365.8 592.9 364.8 593.2 363.8 593.4 362.8 593.5 361.8 592.8 360.8 592.9 359.8 593.0 358.8 593.4 358.0 593.1 357.8 593.2 357.0 591.3 356.8 591.4 355.8 591.8 354.8 591.7 353.8 591.7 352.8 591.7 351.8 591.5 350.8 591.5 349.8 591.8 348.8 591.6 347.8 591.5 346.8 591.5 345.8 591.3 344.8 591.8 343.8 591.3 342.8 591.6 341.8 591.3 340.8 591.9 339.8 591.5 338.8 591.9 337.8 592.0 336.8 591.7 335.8 591.7 334.8 591.8 333.8 591.8 332.8 591.3 331.8 591.8 330.8 591.8 329.8 591.5 328.8 591.5 327.8 591.8 326.8 591.5 325.8 591.8 324.8 591.6 323.8 591.6 323.5 591.8 322.8 593.4 322.5 594.0 321.8 593.8 320.8 594.3 319.8 593.9 318.8 593.9 317.8 594.3 316.8 594.2 315.8 594.4 314.8 594.0 314.0 594.1 313.8 593.1 313.5 592.3 312.8 591.8 311.8 592.3 310.8 591.7 309.8 591.7 308.8 592.0 307.8 592.4 306.8 592.5 306.0 591.8 305.8 592.0 305.0 593.0 304.8 592.8 303.8 592.9 302.8 593.3 301.8 593.0 300.8 592.9 299.8 592.8 299.0 592.6 298.8 592.8 298.0 591.1 297.8 590.9 296.8 591.2 295.8 591.3 294.8 591.3 293.8 590.9 292.8 591.4 291.8 591.1 290.8 590.8 290.5 591.1 289.8 593.0 289.5 593.8 288.8 593.9 287.8 593.6 286.8 593.3 285.8 593.8 284.8 593.4 284.0 594.4 283.8 593.9 283.0 591.6 282.8 591.3 281.8 591.6 280.8 592.1 279.8 592.2 278.8 592.1 277.8 592.5 276.8 592.4 275.8 591.9 274.8 592.0 273.8 592.0 272.8 593.0 271.8 592.7 270.8 592.4 269.8 592.4 268.8 592.9 267.8 592.7 266.8 593.0 265.8 593.3 264.8 593.4 263.8 593.1 262.8 593.2 261.8 594.0 260.8 593.8 259.8 594.2 258.8 593.6 258.0 594.1 257.8 593.9 257.0 592.2 256.8 592.1 255.8 592.3 254.8 592.4 253.8 592.2 252.8 592.0 251.8 592.2 250.8 592.3 250.0 592.1 249.8 592.4 249.0 595.5 248.8 596.0 247.8 594.8 246.8 594.9 245.8 595.7 244.8 595.9 243.8 595.7 242.8 595.4 241.8 595.0 240.8 595.1 239.8 595.3 238.8 595.1 237.8 595.7 236.8 595.3 235.8 595.4 234.8 595.7 234.5 596.2 233.8 595.3 233.6 594.7 232.8 595.2 231.8 595.1 230.8 594.7 229.8 594.4 228.8 595.1 228.0 595.3 227.8 595.6 227.0 596.0 226.8 595.2 226.0 594.4 225.8 595.2 224.8 595.2 223.8 594.7 222.8 594.4 221.8 594.9 220.8 595.2 219.8 594.8 218.8 594.3 217.8 594.9 216.8 595.1 215.8 594.5 214.8 594.4 213.8 594.1 212.8 594.6 212.0 594.6 211.8 593.7 211.0 591.3 210.8 591.2 209.8 591.3 208.8 590.7 207.8 590.8 207.0 590.5 206.8 590.5 205.8 591.0 204.8 590.8 203.8 590.6 202.8 590.5 201.8 590.4 200.8 591.0 199.8 590.4 198.8 590.7 197.8 590.8 196.8 590.6 195.8 590.5 194.8 590.6 193.8 590.9 192.8 590.5 191.8 590.4 190.8 590.6 189.8 590.4 188.8 590.5 187.8 590.4 186.8 590.7 185.8 590.6 184.8 590.6 183.8 590.6 182.8 590.4 181.8 590.6 180.8 590.8 179.8 590.7 178.8 590.4 177.8 590.7 176.8 590.7 175.8 590.4 174.8 591.0 173.8 590.9 172.8 590.5 171.8 590.7 170.8 590.7 169.8 590.8 168.8 590.7 167.8 590.5 166.8 590.6 165.8 590.7 165.5 590.6 164.8 595.0 164.6 596.3 163.8 595.5 162.8 597.1 162.0 596.9 161.8 596.4 161.0 599.3 160.8 598.5 159.8 598.4 158.8 599.1 157.8 599.1 156.8 598.1 155.8 598.1 154.8 598.7 153.8 599.0 152.8 598.7 151.8 598.7 150.8 598.2 149.8 599.5 148.8 597.9 147.8 598.1 147.0 599.3 146.8 597.5 146.0 592.1 145.8 593.0 145.0 596.4 144.8 596.2 143.8 597.2 142.8 596.8 141.8 597.1 140.8 597.2 139.8 597.0 138.8 597.6 137.8 597.1 136.8 597.7 135.8 597.9 134.8 597.0 134.0 597.9 133.8 598.0 133.0 595.8 132.8 596.4 131.8 595.8 130.8 595.5 129.8 595.3 128.8 595.7 127.8 595.9 126.8 596.2 125.8 596.3 124.8 596.2 124.5 596.4 124.0 591.5 123.8 591.1 122.8 591.3 121.8 590.8 120.8 591.0 119.8 591.0 118.8 590.6 117.8 590.6 116.8 590.8 115.8 591.1 114.8 591.1 113.8 590.7 112.8 590.8 111.8 590.9 111.0 590.9 110.8 592.5 110.5 595.3 109.8 595.0 108.8 595.1 107.8 595.2 106.8 594.7 105.8 594.6 104.8 594.6 103.8 595.0 102.8 595.1 101.8 594.6 101.5 595.1 101.0 590.4 100.8 590.5 99.8 590.1 98.8 590.4 97.8 590.3 96.8 590.1 95.8 589.9 94.8 590.1 93.8 590.3 92.8 590.1 91.8 590.0 91.3 590.4 91.0 593.0 90.8 592.7 89.8 593.5 88.8 594.0 87.8 594.1 87.0 593.7 86.8 594.0 85.8 591.4 85.5 591.4 84.8 593.5 84.7 593.9 84.0 590.5 83.8 590.8 82.8 590.8 81.8 590.9 80.8 590.8 79.8 590.7 78.8 590.4 77.8 590.7 76.8 590.4 75.8 590.5 74.8 590.4 73.8 590.6 72.8 590.5 71.8 590.9 70.8 590.4 70.5 590.5 70.0 592.6 69.8 592.8 68.8 593.7 67.8 593.2 67.0 594.4 66.8 593.7 66.0 590.2 65.8 590.0 64.8 590.3 63.8 590.5 62.8 590.3 61.8 590.2 60.8 589.9 59.8 590.3 58.8 590.4 57.8 590.1 57.4 590.3 56.8 592.0 56.0 595.4 55.8 586.4Z"/>
 <rect x="84" y="505" width="1.6" height="37" fill="#111"/>
 <rect x="84" y="567" width="1.6" height="37" fill="#111"/>
</svg>

<div class="a" style="left:525.5px;top:513px;width:4px;height:30px;background:#c5cdd3;border-radius:2px"></div>
<div class="a" style="left:523px;top:505px;width:9.5px;height:10.5px;border-radius:50%;background:radial-gradient(circle at 45% 45%,#e0161f,#c1121a)"></div>
<div class="a" style="left:525.5px;top:574px;width:4px;height:30px;background:#c5cdd3;border-radius:2px"></div>
<div class="a" style="left:523px;top:566px;width:9.5px;height:10.5px;border-radius:50%;background:radial-gradient(circle at 45% 45%,#e0161f,#c1121a)"></div>
<svg class="a" style="left:538px;top:528px" width="20" height="16" viewBox="0 0 20 16">
 <path d="M1.5 5.5 H5.5 L10 1.2 V14.8 L5.5 10.5 H1.5 Z" fill="#404040"/>
 <path d="M11.5 4.5 Q14 8 11.5 11.5" fill="none" stroke="#555" stroke-width="1.5"/><path d="M13.8 2 Q18 8 13.8 14" fill="none" stroke="#888" stroke-width="1.4"/>
</svg>
<svg class="a" style="left:538px;top:588px" width="20" height="16" viewBox="0 0 20 16">
 <path d="M1.5 5.5 H5.5 L10 1.2 V14.8 L5.5 10.5 H1.5 Z" fill="#404040"/>
 <path d="M11.5 4.5 Q14 8 11.5 11.5" fill="none" stroke="#555" stroke-width="1.5"/><path d="M13.8 2 Q18 8 13.8 14" fill="none" stroke="#888" stroke-width="1.4"/>
</svg>

<!-- tabs -->
<div class="a" style="left:575px;top:472px;width:555px;height:150px;border:2px solid #c9ccce;background:#fff"></div>
<div class="tab" style="left:576px;width:37px"></div>
<div class="tab" style="left:613px;width:38px"></div>
<div class="tab" style="left:651px;width:38px"></div>
<div class="tab" style="left:689px;width:38px"></div>
<div class="tab" style="left:727px;width:38px"></div>
<div class="tab" style="left:766px;width:37px;background:#fff;height:31px;border-color:#c5c9cc"></div>
<svg class="a" style="left:572px;top:438px" width="240" height="40" viewBox="0 0 240 40">
 <g fill="#333">
 <path d="M9 12.5 H13.5 L18 9.5 V21.5 L13.5 19.5 H9 Z"/>
 <path d="M19.8 11.5 Q22 15.5 19.8 19.5 M22.3 9.5 Q25.6 15.5 22.3 21.5" fill="none" stroke="#333" stroke-width="1.6"/>
 <path d="M22.5 29 L30 21.5" stroke="#333" stroke-width="3.2" stroke-linecap="round"/>
 <circle cx="32.3" cy="19" r="4.6"/>
 <path d="M75 18.5 L60.5 10.5 L61.5 14 Q54 12.5 50.5 16 Q56 15.5 59 17.5 Q51 18 47 23 Q53 20 59 20.5 Q53 23 50.5 27 Q56 23.5 61.5 23 L60.5 26.8 Z"/>
 <circle cx="97.5" cy="18.2" r="10.2"/><path d="M101 26 L109.5 28.8 L105 22 Z"/>
 <rect x="127.1" y="11.6" width="19.5" height="3.1"/><rect x="132.4" y="9" width="8.4" height="3"/>
 <path d="M128.7 16.8 H145.5 V30 H128.7 Z"/>
 <path d="M170.2 14.6 L174.7 10.2 L179.2 14.6" fill="none" stroke="#333" stroke-width="2.8" stroke-linecap="round" stroke-linejoin="round"/><path d="M174.7 10.5 V20.5" stroke="#333" stroke-width="2.6"/>
 <path d="M202.5 28.8 L203.8 24 L217.5 10.8 A1.8 1.8 0 0 1 220.3 10.6 L221 11.3 A1.8 1.8 0 0 1 220.8 14 L207.2 27.3 Z"/>
 </g>
 <path d="M32.5 18.8 L35.5 15.8" stroke="#d0d8dd" stroke-width="2.6" stroke-linecap="round"/>
 <circle cx="97.5" cy="18.2" r="5.8" fill="none" stroke="#cfd7dc" stroke-width="1.5"/>
 <path d="M96.8 14.8 V18.8 H100" fill="none" stroke="#cfd7dc" stroke-width="1.1"/>
 <g fill="#cfd7dc"><rect x="131.4" y="19" width="2.2" height="9"/><rect x="135.9" y="19" width="2.2" height="9"/><rect x="140.4" y="19" width="2.2" height="9"/></g>
 <text x="165.5" y="29.6" font-family="Liberation Sans" font-weight="bold" font-size="9.3" fill="#333" textLength="19" lengthAdjust="spacingAndGlyphs">WAV</text>
</svg>

<div class="a" style="left:592px;top:497px;font-size:11px;color:#222">Annotation:</div>
<div class="a" style="left:592px;top:513px;width:489px;height:20px;border:1px solid #b9cdd9;border-top-color:#5f7f9a;background:#fff"></div>
<div class="a" style="left:596px;top:516px;width:2px;height:13px;background:#6a6a6a"></div>
<svg class="a" style="left:802.5px;top:585.5px" width="23" height="23">
 <rect x="0" y="0" width="22.5" height="22.3" rx="2" fill="#50c04b"/>
 <path d="M4.2 10.8 L10.5 16.3 L19 7.5" fill="none" stroke="#f2fde9" stroke-width="4.2" stroke-linecap="round" stroke-linejoin="round"/>
</svg>
<div class="a" style="left:831.5px;top:591px;font-size:11.2px;color:#222;transform:scaleX(0.9);transform-origin:0 0">OK</div>

</body></html>
